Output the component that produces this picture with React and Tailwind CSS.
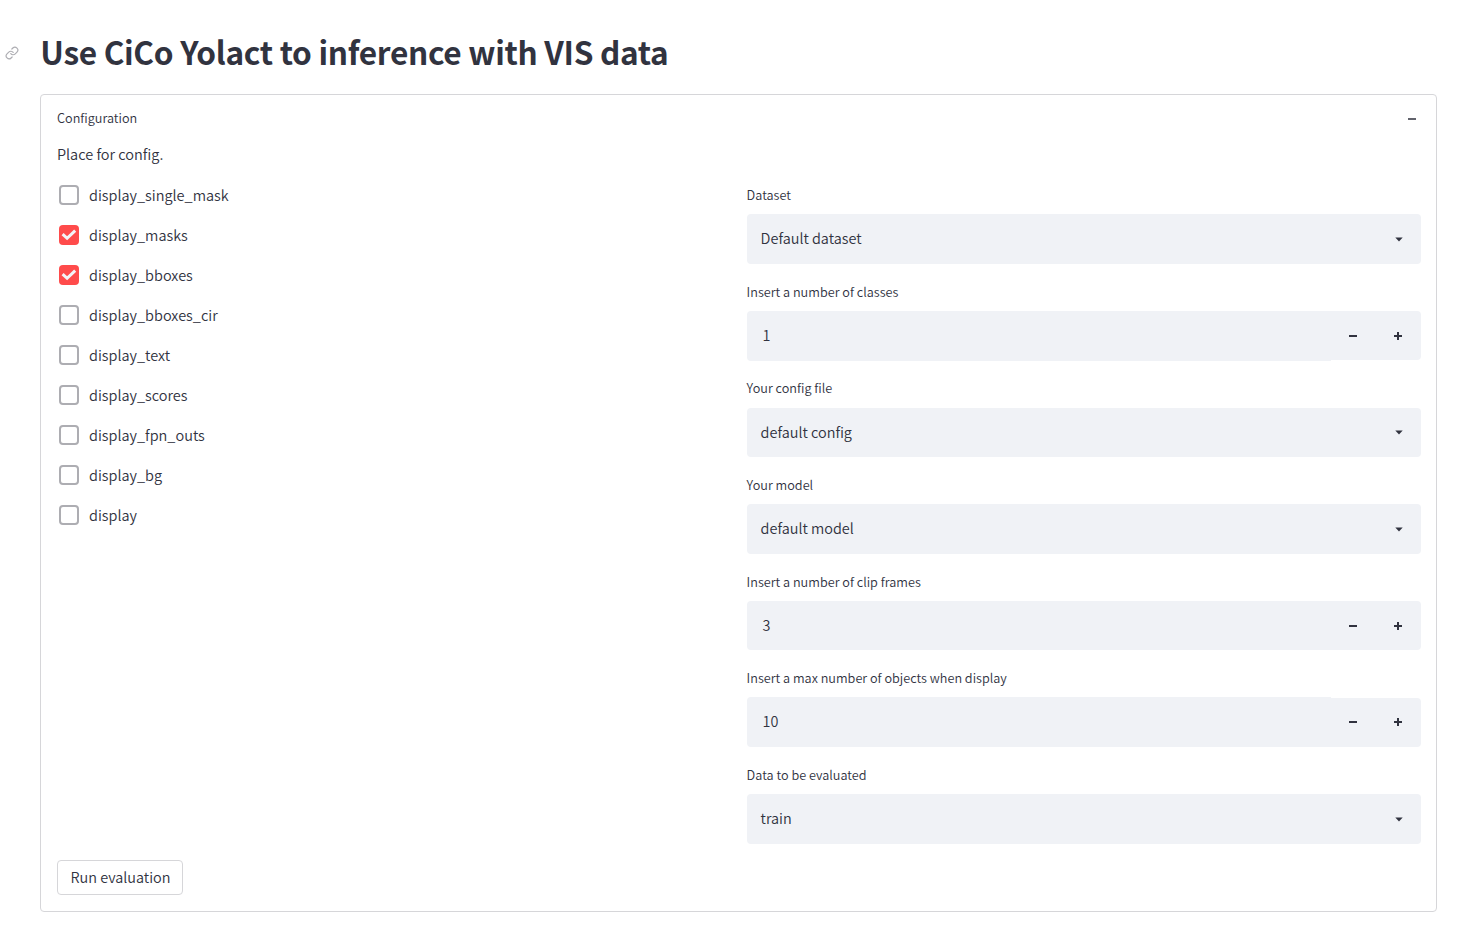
const checks = [
  { name: "display_single_mask", on: false },
  { name: "display_masks", on: true },
  { name: "display_bboxes", on: true },
  { name: "display_bboxes_cir", on: false },
  { name: "display_text", on: false },
  { name: "display_scores", on: false },
  { name: "display_fpn_outs", on: false },
  { name: "display_bg", on: false },
  { name: "display", on: false },
];

const fields = [
  { label: "Dataset", value: "Default dataset", type: "select" },
  { label: "Insert a number of classes", value: "1", type: "number" },
  { label: "Your config file", value: "default config", type: "select" },
  { label: "Your model", value: "default model", type: "select" },
  { label: "Insert a number of clip frames", value: "3", type: "number" },
  { label: "Insert a max number of objects when display", value: "10", type: "number" },
  { label: "Data to be evaluated", value: "train", type: "select" },
];

function LinkIcon() {
  return (
    <svg width="14" height="14" viewBox="0 0 24 24" fill="none" stroke="#adadb2" strokeWidth="2" strokeLinecap="round" strokeLinejoin="round">
      <path d="M10 13a5 5 0 0 0 7.54.54l3-3a5 5 0 0 0-7.07-7.07l-1.72 1.71" />
      <path d="M14 11a5 5 0 0 0-7.54-.54l-3 3a5 5 0 0 0 7.07 7.07l1.71-1.71" />
    </svg>
  );
}

function Checkbox({ name, on }) {
  return (
    <label className="flex h-6 items-center">
      {on ? (
        <span className="ml-[2px] flex size-5 shrink-0 rounded-[4px] bg-[#ff4b4b]">
          <svg width="20" height="20" viewBox="0 0 20 20" fill="none" stroke="#f3f4f7" strokeWidth="3">
            <path d="M3.6 9.1L8.1 13.3L16.2 5.7" />
          </svg>
        </span>
      ) : (
        <span className="ml-[2px] size-5 shrink-0 rounded-[4px] border-2 border-[#adadb2] bg-white" />
      )}
      <span className="ml-[10px] text-[14.5px] leading-6">{name}</span>
    </label>
  );
}

function Caret() {
  return (
    <svg width="8" height="5" viewBox="0 0 8 5" className="mt-px mr-[18px]">
      <path d="M0.3 0.4H7.7L4 4.6Z" fill="#31333f" />
    </svg>
  );
}

function Stepper({ plus }) {
  return (
    <button className="flex h-full w-[45px] items-center justify-center pr-px">
      <svg width="8" height="8" viewBox="0 0 8 8" fill="#31333f" shapeRendering="crispEdges">
        <path d={plus ? "M0 3H3V0H5V3H8V5H5V8H3V5H0Z" : "M0 3H8V5H0Z"} />
      </svg>
    </button>
  );
}

function Field({ label, value, type }) {
  return (
    <div className="flex flex-col">
      <div className="-mt-[0.1875px] mb-[8.1875px] -ml-[0.4px] h-[23px] text-[12.68px] leading-[23px]">{label}</div>
      {type === "select" ? (
        <div className="flex h-[49.6px] items-center justify-between rounded-[4px] bg-[#f0f2f6] pl-[13.6px]">
          <span className="pb-[1.6px] text-[14.45px] leading-6">{value}</span>
          <Caret />
        </div>
      ) : (
        <div className="flex h-[49.6px]">
          <div className="flex flex-1 items-center rounded-l-[4px] bg-[#f0f2f6] pb-[1.6px] pl-[15.6px] text-[14.45px] leading-6">{value}</div>
          <div className="mt-[0.4px] flex h-[48.8px] rounded-r-[4px] bg-[#f0f2f6]">
            <Stepper />
            <Stepper plus />
          </div>
        </div>
      )}
    </div>
  );
}

export default function App() {
  return (
    <div className="h-[927px] overflow-hidden bg-white font-['Noto_Sans_CJK_JP','Noto_Sans_CJK_SC',sans-serif] font-[350] text-[#31333f]">
      <div className="flex h-[94px] items-start pl-[5px] pt-[27px]">
        <div className="flex h-[52px] w-[35.3px] items-center">
          <LinkIcon />
        </div>
        <h1 className="text-[31.6px] leading-[48px] font-bold tracking-[-0.3px]">Use CiCo Yolact to inference with VIS data</h1>
      </div>
      <main className="ml-10 h-[818px] w-[1397px] rounded-[4px] border border-[#d6d6d9] pr-[15px] pl-4">
        <div className="flex h-[46px] items-center justify-between">
          <span className="text-[12.68px] leading-5">Configuration</span>
          <svg width="8" height="2" viewBox="0 0 8 2" className="mt-[2px] mr-[5px]" shapeRendering="crispEdges">
            <path d="M0 0H8V2H0Z" fill="#62636c" />
          </svg>
        </div>
        <p className="h-[42.4px] text-[14.5px] leading-[25px]">Place for config.</p>
        <div className="grid h-[660.2px] grid-cols-2 items-start gap-4">
          <div className="flex flex-col gap-4">
            {checks.map((c) => (
              <Checkbox key={c.name} {...c} />
            ))}
          </div>
          <div className="flex flex-col gap-4">
            {fields.map((f) => (
              <Field key={f.label} {...f} />
            ))}
          </div>
        </div>
        <button className="mt-[16.4px] flex h-[35px] w-[126px] items-center justify-center rounded-[4px] border border-[#d6d6d9] pl-px text-[14.45px] leading-6">
          Run evaluation
        </button>
      </main>
    </div>
  );
}
